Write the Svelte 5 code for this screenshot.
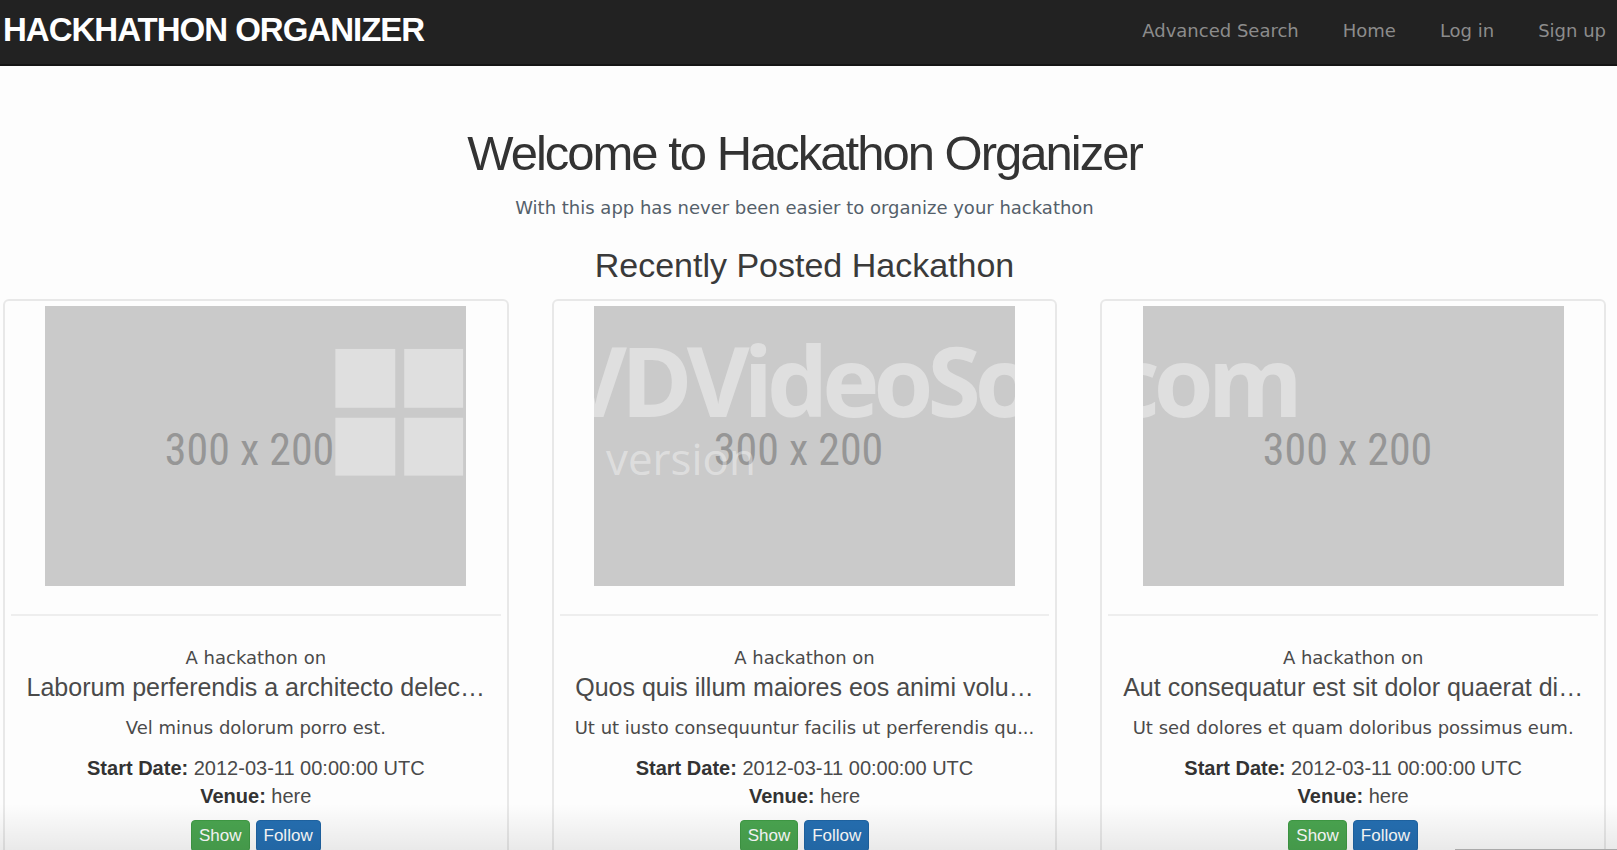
<script>
  const links = ['Advanced Search', 'Home', 'Log in', 'Sign up'];
  const hackathons = [
    { title: 'Laborum perferendis a architecto delec…', about: 'Vel minus dolorum porro est.', mark: 'logo' },
    { title: 'Quos quis illum maiores eos animi volu…', about: 'Ut ut iusto consequuntur facilis ut perferendis qu...', mark: 'name' },
    { title: 'Aut consequatur est sit dolor quaerat di…', about: 'Ut sed dolores et quam doloribus possimus eum.', mark: 'domain' }
  ];
</script>

<div class="page">
  <header>
    <a class="brand" href="#home">Hackhathon Organizer</a>
    <nav>
      {#each links as link}
        <a href="#{link}">{link}</a>
      {/each}
    </nav>
  </header>

  <main>
    <h1>Welcome to Hackathon Organizer</h1>
    <p class="tagline">With this app has never been easier to organize your hackathon</p>
    <h2>Recently Posted Hackathon</h2>

    <div class="cards">
      {#each hackathons as item}
        <article>
          <svg class="picture" viewBox="0 0 422 281" role="img" aria-label="300 x 200">
            <rect width="422" height="281" fill="#cacaca" />
            <text class="size" x="205" y="159" text-anchor="middle">300 x 200</text>
            {#if item.mark === 'logo'}
              <g class="mark">
                <rect x="291" y="43" width="60" height="59" />
                <rect x="360" y="43" width="59" height="59" />
                <rect x="291" y="112" width="60" height="58" />
                <rect x="360" y="112" width="59" height="58" />
              </g>
            {:else if item.mark === 'name'}
              <text class="mark name" x="-30" y="111">VDVideoSo</text>
              <text class="mark version" x="12" y="169">version</text>
            {:else}
              <text class="mark name" x="-33" y="111">com</text>
            {/if}
          </svg>
          <hr />
          <p class="kind">A hackathon on</p>
          <h3>{item.title}</h3>
          <p class="about">{item.about}</p>
          <div class="facts"><b>Start Date:</b> 2012-03-11 00:00:00 UTC</div>
          <div class="facts"><b>Venue:</b> here</div>
          <div class="actions">
            <button class="show">Show</button>
            <button class="follow">Follow</button>
          </div>
        </article>
      {/each}
    </div>
  </main>
  <div class="shade"></div>
  <div class="status"></div>
</div>

<style>
  :global(body) { margin: 0; background: #fdfdfd; }
  .page {
    position: relative;
    height: 100vh;
    overflow: hidden;
    background: #fdfdfd;
    color: #4a4a4a;
    font-family: "Liberation Sans", Arial, sans-serif;
  }
  header {
    display: flex;
    justify-content: space-between;
    align-items: center;
    box-sizing: border-box;
    height: 66px;
    padding: 0 11px 4px 3px;
    background: #222;
    border-bottom: 2px solid #151515;
  }
  a { text-decoration: none; }
  .brand {
    color: #fff;
    font-size: 33px;
    font-weight: bold;
    text-transform: uppercase;
    letter-spacing: -1px;
  }
  nav { display: flex; gap: 44px; }
  nav a { color: #8c8c8c; font: 18px "DejaVu Sans", Verdana, sans-serif; }
  main { padding: 0 11px 0 3px; text-align: center; }
  h1, h2, h3, p { margin: 0; font-weight: normal; }
  h1 { padding-top: 57px; font-size: 49px; line-height: 60px; letter-spacing: -2px; color: #333; }
  .tagline, .kind, .about { font: 18px/28px "DejaVu Sans", Verdana, sans-serif; }
  .tagline { margin-top: 11px; color: #54606a; }
  h2 { margin-top: 21px; font-size: 34px; line-height: 44px; color: #3a3a3a; }
  .cards { display: grid; grid-template-columns: repeat(3, 1fr); gap: 43px; margin-top: 12px; }
  article {
    box-sizing: border-box;
    min-width: 0;
    padding: 5px 6px 20px;
    border: 2px solid #e8e8e8;
    border-radius: 6px;
    white-space: nowrap;
  }
  .picture { display: block; width: 86%; margin: 0 auto; }
  .size { font: 44px "Roboto Condensed", "Liberation Sans Narrow", "Arial Narrow", sans-serif; fill: #969696; }
  .mark { fill: #fff; fill-opacity: 0.4; }
  .name { font: bold 97px "Open Sans", sans-serif; letter-spacing: -6px; }
  .version { font: 44px "Open Sans", sans-serif; }
  hr { height: 2px; margin: 28px 0; border: 0; background: #eee; }
  h3 { font-size: 25px; line-height: 30px; }
  .about { margin-top: 12px; }
  .facts { font-size: 20px; line-height: 28px; }
  .about + .facts { margin-top: 12px; }
  b { color: #333; }
  .actions { display: flex; justify-content: center; gap: 6px; margin-top: 10px; }
  button {
    padding: 5px 7px;
    border: 1px solid #3f9a45;
    border-radius: 4px;
    background: #4aa550;
    color: #fff;
    font: 17px/20px "Liberation Sans", Arial, sans-serif;
  }
  .follow { background: #256fb2; border-color: #1f64a3; }
  .shade {
    position: absolute;
    inset: auto 0 0;
    height: 46px;
    background: linear-gradient(transparent, rgba(0, 0, 0, 0.08));
    pointer-events: none;
  }
  .status {
    position: absolute;
    right: 0;
    bottom: 0;
    width: 10%;
    height: 1px;
    background: #aaa;
  }
</style>
